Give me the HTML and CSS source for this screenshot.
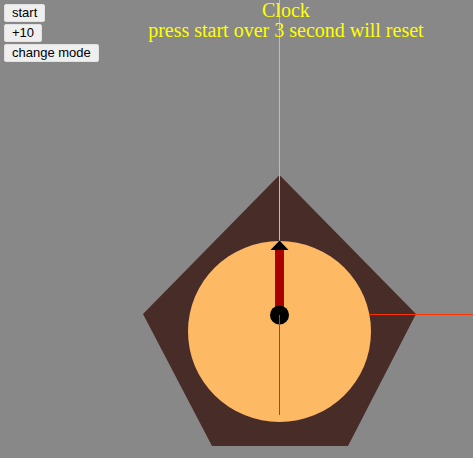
FILE: index.html
```html
<!DOCTYPE html>
<html>
<head>
<meta charset="utf-8">
<link rel="stylesheet" href="styles.css">
</head>
<body>
<svg class="scene" width="473" height="458" viewBox="0 0 473 458">
  <polygon points="279.5,175 416,314 348,446 212,446 143,314" fill="#472c27"/>
  <ellipse cx="279.5" cy="331.5" rx="91.5" ry="90.5" fill="#fdb964"/>
  <line x1="279.5" y1="0" x2="279.5" y2="241" stroke="#80ff00" stroke-width="1"/>
  <line x1="370" y1="314.5" x2="473" y2="314.5" stroke="#ff3300" stroke-width="1"/>
  <rect x="275" y="249" width="9" height="58" fill="#aa0000"/>
  <polygon points="279.5,240.5 288.5,250 270.5,250" fill="#000"/>
  <circle cx="279.5" cy="315" r="9.5" fill="#000"/>
  <line x1="279.5" y1="315" x2="279.5" y2="415" stroke="#1a6ad0" stroke-width="1"/>
</svg>
<div class="overlay">
  <div class="controls">
    <button class="btn">start</button>
    <button class="btn">+10</button>
    <button class="btn">change mode</button>
  </div>
  <div class="title">
    <div class="title-line">Clock</div>
    <div class="title-line">press start over 3 second will reset</div>
  </div>
</div>
</body>
</html>
```
FILE: styles.css
```css
html, body {
  margin: 0;
  padding: 0;
  width: 473px;
  height: 458px;
  overflow: hidden;
  background: #888888;
}
body {
  position: relative;
}
.scene {
  position: absolute;
  left: 0;
  top: 0;
  display: block;
}
.overlay {
  position: relative;
  display: flex;
  align-items: flex-start;
}
.controls {
  display: flex;
  flex-direction: column;
  align-items: flex-start;
  gap: 2px;
  padding: 4px 0 0 4px;
}
.btn {
  font-family: "Liberation Sans", Arial, sans-serif;
  font-size: 13px;
  line-height: 16px;
  height: 18px;
  padding: 0 7px;
  margin: 0;
  border: 1px solid #e2e2e2;
  border-radius: 2px;
  background: #efefef;
  color: #000;
}
.title {
  flex: 1;
  text-align: center;
  font-family: "Liberation Serif", "Times New Roman", serif;
  font-size: 20px;
  line-height: 20px;
  color: #ffff00;
}
```
